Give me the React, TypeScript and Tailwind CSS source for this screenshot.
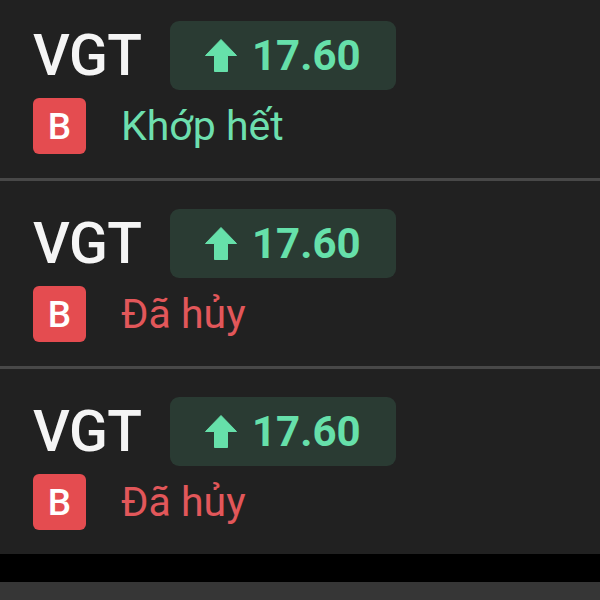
import React from "react";

type Row = { status: string; color: string; first?: boolean };

const rows: Row[] = [
  { status: "Khớp hết", color: "text-[#6ddfae]", first: true },
  { status: "Đã hủy", color: "text-[#e2575a]" },
  { status: "Đã hủy", color: "text-[#e2575a]" },
];

function Arrow() {
  return (
    <svg width="32" height="33" viewBox="0 0 32 33" className="shrink-0">
      <polygon
        points="16,0.5 31.5,16.5 22.5,16.5 22.5,32.5 9.5,32.5 9.5,16.5 0.5,16.5"
        fill="#66e0aa"
        stroke="#66e0aa"
        strokeWidth="1"
        strokeLinejoin="round"
      />
    </svg>
  );
}

function OrderRow({ row }: { row: Row }) {
  return (
    <div
      className={`flex flex-col pl-[33px] pb-[24px] ${row.first ? "pt-[21px]" : "pt-[28px]"}`}
    >
      <div className="flex items-center">
        <div className="w-[137px] text-[57px] font-medium leading-none text-[#f5f5f5] tracking-[-0.5px]">
          VGT
        </div>
        <div className="flex h-[69px] w-[226px] items-center rounded-[9px] bg-[#2a3b33] pl-[35px]">
          <Arrow />
          <span className="ml-[15px] text-[42px] font-bold leading-none text-[#66e0aa]">
            17.60
          </span>
        </div>
      </div>
      <div className="mt-[8px] flex items-center">
        <div className="flex h-[56px] w-[53px] items-center justify-center rounded-[6px] bg-[#e44c50] text-[37px] font-medium leading-none text-white">
          B
        </div>
        <div className={`ml-[35px] text-[41px] leading-none ${row.color}`}>{row.status}</div>
      </div>
    </div>
  );
}

export default function App() {
  return (
    <div
      className="flex h-[600px] w-[600px] flex-col overflow-hidden bg-[#212121]"
      style={{ fontFamily: "Roboto, 'Noto Sans', sans-serif" }}
    >
      <OrderRow row={rows[0]} />
      <div className="h-[3px] bg-[#484848]" />
      <OrderRow row={rows[1]} />
      <div className="h-[3px] bg-[#484848]" />
      <OrderRow row={rows[2]} />
      <div className="h-[28px] bg-black" />
      <div className="flex-1 bg-[#363636]" />
    </div>
  );
}
